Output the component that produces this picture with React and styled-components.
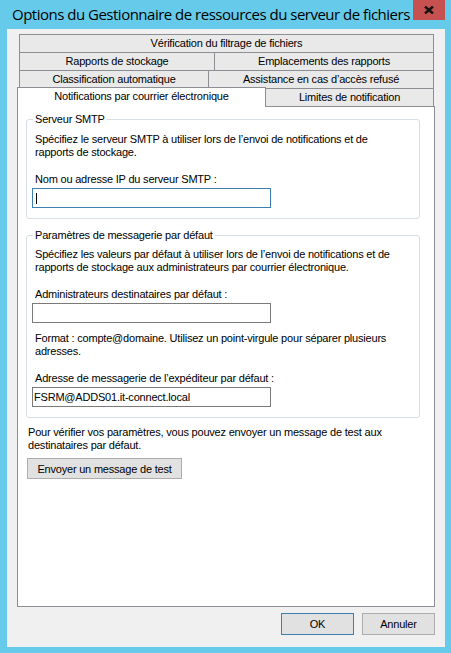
import React from 'react';
import styled, { createGlobalStyle } from 'styled-components';

const Global = createGlobalStyle`
  html, body { margin: 0; padding: 0; background: #66cbea; }
  body {
    width: 451px; height: 653px; overflow: hidden;
    font-family: "Liberation Sans", Arial, sans-serif;
    color: #000;
  }
  * { box-sizing: border-box; }
`;

const Window = styled.div`
  width: 451px;
  height: 653px;
  background: #66cbea;
  display: flex;
  flex-direction: column;
`;

const TitleBar = styled.div`
  height: 29px;
  flex: none;
  display: flex;
  justify-content: space-between;
  align-items: flex-start;
  padding-left: 12px;
`;

const Title = styled.div`
  font-family: "Open Sans", "Noto Sans", sans-serif;
  font-size: 15px;
  letter-spacing: -0.5px;
  line-height: 20px;
  padding-top: 4px;
  color: #000;
  white-space: nowrap;
  overflow: hidden;
  min-width: 0;
`;

const CloseButton = styled.div`
  flex: none;
  width: 32px;
  height: 20px;
  margin-right: 6px;
  background: #c75050;
  display: flex;
  align-items: center;
  justify-content: center;
`;

const Client = styled.div`
  flex: 1;
  margin: 0 6px 6px 7px;
  background: #f0f0f0;
  padding: 5px 10px 12px 10px;
  display: flex;
  flex-direction: column;
`;

const TabStrip = styled.div`
  display: flex;
  flex-direction: column;
  padding: 0 1px 0 2px;
`;

const TabRow = styled.div`
  display: flex;
  align-items: flex-start;
  & + & { margin-top: -1px; }
`;

const Tab = styled.div`
  flex: ${p => (p.$w ? `0 0 ${p.$w}px` : '1 1 0')};
  height: ${p => (p.$last ? 18 : 19)}px;
  border: 1px solid #8c8e94;
  ${p => (p.$last ? 'border-bottom: none;' : '')}
  background: #e9e9e9;
  font-size: 11px;
  line-height: 17px;
  text-align: center;
  white-space: nowrap;
  letter-spacing: -0.2px;
  & + & { margin-left: -1px; }
`;

const ActiveTab = styled.div`
  flex: 0 0 ${p => p.$w}px;
  height: 20px;
  margin: -1px 0 -1px -2px;
  border: 1px solid #8c8e94;
  border-bottom: none;
  background: #fff;
  position: relative;
  z-index: 1;
  font-size: 11px;
  line-height: 17px;
  text-align: center;
  white-space: nowrap;
  letter-spacing: -0.2px;
  & + ${Tab} { margin-left: -1px; }
`;

const Panel = styled.div`
  height: 501px;
  flex: none;
  border: 1px solid #8c8e94;
  background: #fff;
  padding: 6px 14px 0 8px;
  display: flex;
  flex-direction: column;
`;

const Group = styled.fieldset`
  margin: ${p => (p.$first ? 0 : '10px')} 0 0 0;
  padding: 0 10px 10px 5px;
  border: 1px solid #d5dfe5;
  border-radius: 3px;
  min-width: 0;
`;

const Legend = styled.legend`
  margin-left: 1px;
  padding: 0 2px;
  font-size: 11px;
  line-height: 13px;
  letter-spacing: -0.2px;
`;

const Text = styled.div`
  font-size: 11px;
  line-height: 13px;
  letter-spacing: -0.2px;
  margin-top: ${p => p.$mt || 0}px;
  padding-left: ${p => p.$indent ?? 3}px;
`;

const TextBox = styled.div`
  width: 239px;
  height: 20px;
  margin-top: 2px;
  border: 1px solid ${p => (p.$focused ? '#3c7fb1' : '#7a7a7a')};
  background: #fff;
  padding-left: 1px;
  display: flex;
  align-items: center;
  font-size: 11px;
  letter-spacing: -0.2px;
`;

const Caret = styled.span`
  display: block;
  width: 1px;
  height: 11px;
  margin-left: 2px;
  background: #000;
`;

const Button = styled.div`
  width: ${p => p.$w}px;
  height: ${p => p.$h}px;
  margin-top: ${p => p.$mt || 0}px;
  margin-left: ${p => p.$ml || 0}px;
  border: 1px solid ${p => (p.$default ? '#3c7fb1' : '#adadad')};
  background: #e1e1e1;
  display: flex;
  align-items: center;
  justify-content: center;
  font-size: 11px;
  letter-spacing: -0.2px;
  white-space: nowrap;
`;

const Footer = styled.div`
  display: flex;
  justify-content: flex-end;
  gap: 8px;
  margin-top: 6px;
`;

export default function App() {
  return (
    <>
      <Global />
      <Window>
        <TitleBar>
          <Title>Options du Gestionnaire de ressources du serveur de fichiers</Title>
          <CloseButton>
            <svg width="10" height="8" viewBox="0 0 10 8">
              <path d="M1 0.5 L9 7.5 M9 0.5 L1 7.5" stroke="#111" strokeWidth="2.4" />
            </svg>
          </CloseButton>
        </TitleBar>
        <Client>
          <TabStrip>
            <TabRow>
              <Tab>Vérification du filtrage de fichiers</Tab>
            </TabRow>
            <TabRow>
              <Tab $w={196}>Rapports de stockage</Tab>
              <Tab>Emplacements des rapports</Tab>
            </TabRow>
            <TabRow>
              <Tab $w={190}>Classification automatique</Tab>
              <Tab>Assistance en cas d’accès refusé</Tab>
            </TabRow>
            <TabRow>
              <ActiveTab $w={249}>Notifications par courrier électronique</ActiveTab>
              <Tab $last>Limites de notification</Tab>
            </TabRow>
          </TabStrip>
          <Panel>
            <Group $first>
              <Legend>Serveur SMTP</Legend>
              <Text $mt={7}>
                Spécifiez le serveur SMTP à utiliser lors de l’envoi de notifications et de
                <br />
                rapports de stockage.
              </Text>
              <Text $mt={14}>Nom ou adresse IP du serveur SMTP :</Text>
              <TextBox $focused>
                <Caret />
              </TextBox>
            </Group>
            <Group>
              <Legend>Paramètres de messagerie par défaut</Legend>
              <Text $mt={6}>
                Spécifiez les valeurs par défaut à utiliser lors de l’envoi de notifications et de
                <br />
                rapports de stockage aux administrateurs par courrier électronique.
              </Text>
              <Text $mt={14}>Administrateurs destinataires par défaut :</Text>
              <TextBox />
              <Text $mt={9}>
                Format : compte@domaine. Utilisez un point-virgule pour séparer plusieurs
                <br />
                adresses.
              </Text>
              <Text $mt={14}>Adresse de messagerie de l’expéditeur par défaut :</Text>
              <TextBox>FSRM@ADDS01.it-connect.local</TextBox>
            </Group>
            <Text $mt={8} $indent={2}>
              Pour vérifier vos paramètres, vous pouvez envoyer un message de test aux
              <br />
              destinataires par défaut.
            </Text>
            <Button $w={155} $h={21} $mt={6} $ml={1}>Envoyer un message de test</Button>
          </Panel>
          <Footer>
            <Button $w={73} $h={22} $default>OK</Button>
            <Button $w={73} $h={22}>Annuler</Button>
          </Footer>
        </Client>
      </Window>
    </>
  );
}
